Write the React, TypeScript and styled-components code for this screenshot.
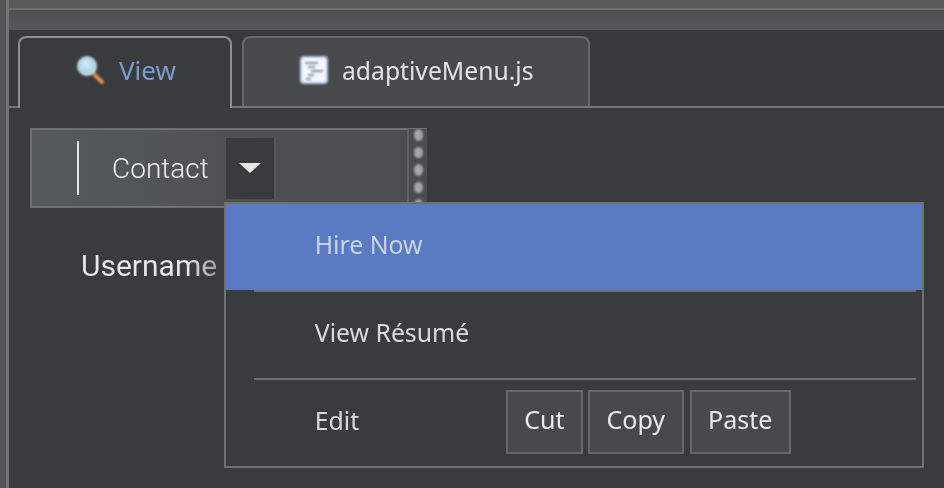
import React from "react";
import styled, { createGlobalStyle } from "styled-components";

const GlobalStyle = createGlobalStyle`
  html, body {
    margin: 0;
    padding: 0;
    height: 100%;
    background: #3a3b3d;
    overflow: hidden;
  }
  #root {
    height: 100%;
  }
`;

const SearchIcon = () => (
  <IconSvg viewBox="0 0 30 30" width={30} height={30}>
    <defs>
      <radialGradient id="lens" cx="45%" cy="40%" r="60%">
        <stop offset="0%" stopColor="#d8ecf6" />
        <stop offset="70%" stopColor="#a9d2e6" />
        <stop offset="100%" stopColor="#dbe6ea" />
      </radialGradient>
    </defs>
    <line x1="18" y1="19" x2="26" y2="27" stroke="#c97a3c" strokeWidth="4.5" strokeLinecap="round" />
    <line x1="19" y1="21" x2="26" y2="27" stroke="#eeb27c" strokeWidth="1.4" strokeLinecap="round" />
    <circle cx="11" cy="11" r="10" fill="url(#lens)" />
  </IconSvg>
);

const FileIcon = () => (
  <IconSvg viewBox="0 0 30 30" width={30} height={30}>
    <rect x="2" y="2" width="26" height="26" rx="3" fill="#f4f8fd" stroke="#b4cbf0" strokeWidth="2" />
    <g stroke="#8490a4" strokeWidth="2">
      <line x1="6" y1="8" x2="19" y2="8" />
      <line x1="9" y1="12" x2="16" y2="12" />
      <line x1="12" y1="16" x2="24" y2="16" />
      <line x1="9" y1="20" x2="15" y2="20" />
      <line x1="7" y1="24" x2="12" y2="24" />
    </g>
  </IconSvg>
);

const App = (): JSX.Element => {
  return (
    <Page>
      <GlobalStyle />
      <Rail />
      <Main>
        <TopBar>
          <TopStrip />
          <TopShade />
        </TopBar>
        <TabBar>
          <Tab $active>
            <SearchIcon />
            <TabLabel $active>View</TabLabel>
          </Tab>
          <Tab>
            <FileIcon />
            <TabLabel>adaptiveMenu.js</TabLabel>
          </Tab>
        </TabBar>
        <Content>
          <Toolbar>
            <Separator />
            <ToolLabel>Contact</ToolLabel>
            <DropWrap>
              <DropButton>
                <Caret />
              </DropButton>
              <Menu>
                <MenuRow $selected>
                  <MenuLabel $selected>Hire Now</MenuLabel>
                </MenuRow>
                <MenuDivider />
                <MenuRow>
                  <MenuLabel>View Résumé</MenuLabel>
                </MenuRow>
                <MenuDivider />
                <MenuRow>
                  <EditLabel>Edit</EditLabel>
                  <EditButton>Cut</EditButton>
                  <EditButton>Copy</EditButton>
                  <EditButton>Paste</EditButton>
                </MenuRow>
              </Menu>
            </DropWrap>
            <Grip>
              <GripDot />
              <GripDot />
              <GripDot />
              <GripDot />
              <GripDot />
            </Grip>
          </Toolbar>
          <FieldLabel>Username</FieldLabel>
        </Content>
      </Main>
    </Page>
  );
};

export default App;

const Page = styled.div`
  display: flex;
  width: 944px;
  height: 488px;
  overflow: hidden;
  background: #3a3b3d;
  filter: blur(0.35px);
`;

const Rail = styled.div`
  width: 6px;
  flex-shrink: 0;
  background: #545556;
  border-right: 3px solid #727374;
`;

const Main = styled.div`
  display: flex;
  flex-direction: column;
  flex: 1;
  min-width: 0;
`;

const TopBar = styled.div`
  display: flex;
  flex-direction: column;
  height: 30px;
  flex-shrink: 0;
`;

const TopStrip = styled.div`
  height: 8px;
  background: #565b5a;
  border-bottom: 2px solid #6b706f;
`;

const TopShade = styled.div`
  flex: 1;
  background: linear-gradient(#4d4e50, #565759);
`;

const TabBar = styled.div`
  display: flex;
  gap: 10px;
  height: 78px;
  flex-shrink: 0;
  box-sizing: border-box;
  padding: 6px 0 0 9px;
  border-bottom: 2px solid #737476;
  background: #38393b;
`;

const Tab = styled.div<{ $active?: boolean }>`
  display: flex;
  align-items: center;
  box-sizing: border-box;
  width: ${(p) => (p.$active ? "214px" : "348px")};
  height: ${(p) => (p.$active ? "72px" : "70px")};
  padding: 0 0 ${(p) => (p.$active ? "6px" : "4px")} ${(p) => (p.$active ? "56px" : "55px")};
  gap: 13px;
  background: ${(p) => (p.$active ? "#3a3b3d" : "#48494b")};
  border: 2px solid ${(p) => (p.$active ? "#8d8f90" : "#68696b")};
  border-bottom: none;
  border-radius: 8px 8px 0 0;
`;

const IconSvg = styled.svg`
  flex-shrink: 0;
  filter: blur(0.8px);
`;

const TabLabel = styled.span<{ $active?: boolean }>`
  font-family: "Noto Sans", sans-serif;
  font-size: ${(p) => (p.$active ? "26px" : "24.7px")};
  color: ${(p) => (p.$active ? "#7d9bd0" : "#e2e3e5")};
`;

const Content = styled.div`
  display: flex;
  flex-direction: column;
  flex: 1;
  padding: 20px 0 0 21px;
`;

const Toolbar = styled.div`
  display: flex;
  align-items: center;
  box-sizing: border-box;
  width: 397px;
  height: 80px;
  padding-left: 45px;
  border: 2px solid #6d7171;
  border-right: none;
  background: linear-gradient(90deg, #545a5b, #4c4e4f 70%);
`;

const Separator = styled.div`
  width: 2px;
  height: 54px;
  background: #e4e6e6;
  flex-shrink: 0;
`;

const ToolLabel = styled.span`
  margin: 0 17px 0 33px;
  font-family: Roboto, sans-serif;
  font-size: 28px;
  font-weight: 300;
  color: #eef0f0;
`;

const DropWrap = styled.div`
  position: relative;
  flex-shrink: 0;
`;

const DropButton = styled.div`
  display: flex;
  align-items: center;
  justify-content: center;
  box-sizing: border-box;
  width: 50px;
  height: 61px;
  background: #3a3b3d;
  border-right: 2px solid #56585a;
`;

const Caret = styled.div`
  width: 0;
  height: 0;
  border-left: 11px solid transparent;
  border-right: 11px solid transparent;
  border-top: 10px solid #e6e7e7;
`;

const Grip = styled.div`
  display: flex;
  flex-direction: column;
  align-items: center;
  gap: 6px;
  box-sizing: border-box;
  width: 20px;
  height: 78px;
  margin-left: auto;
  overflow: hidden;
  background: #4a4c4d;
  border-left: 2px solid #5f6263;
`;

const GripDot = styled.div`
  width: 9px;
  height: 11.5px;
  flex-shrink: 0;
  border-radius: 50%;
  background: #a4a5a6;
  filter: blur(1px);
`;

const Menu = styled.div`
  position: absolute;
  top: 64px;
  left: -2px;
  z-index: 2;
  display: flex;
  flex-direction: column;
  box-sizing: border-box;
  width: 700px;
  height: 266px;
  background: #3a3b3d;
  border: 2px solid #6f7072;
`;

const MenuRow = styled.div<{ $selected?: boolean }>`
  display: flex;
  align-items: center;
  flex: 1;
  padding-left: 89px;
  background: ${(p) => (p.$selected ? "#5a7bc1" : "transparent")};
`;

const MenuLabel = styled.span<{ $selected?: boolean }>`
  padding-bottom: 5px;
  font-family: "Noto Sans", sans-serif;
  font-size: 24.8px;
  color: ${(p) => (p.$selected ? "#c9d2e6" : "#d9dadc")};
`;

const EditLabel = styled(MenuLabel)`
  width: 191px;
  flex-shrink: 0;
`;

const MenuDivider = styled.div`
  height: 2px;
  flex-shrink: 0;
  margin: 0 6px 0 28px;
  background: #6f7072;
`;

const EditButton = styled.div`
  display: flex;
  align-items: center;
  box-sizing: border-box;
  height: 64px;
  margin: 0 5px 2px 0;
  padding: 0 16.5px 5px;
  font-family: "Noto Sans", sans-serif;
  font-size: 25px;
  color: #e9e9ea;
  background: #48494b;
  border: 2px solid #67686a;
  border-radius: 1px;

  &:last-child {
    margin-left: 1px;
  }
`;

const FieldLabel = styled.span`
  align-self: flex-start;
  margin: 40px 0 0 51px;
  font-family: Roboto, sans-serif;
  font-size: 30px;
  font-weight: 400;
  color: transparent;
  background: linear-gradient(90deg, #e8e9e9 78%, #9a9b9c 100%);
  background-clip: text;
  -webkit-background-clip: text;
`;
